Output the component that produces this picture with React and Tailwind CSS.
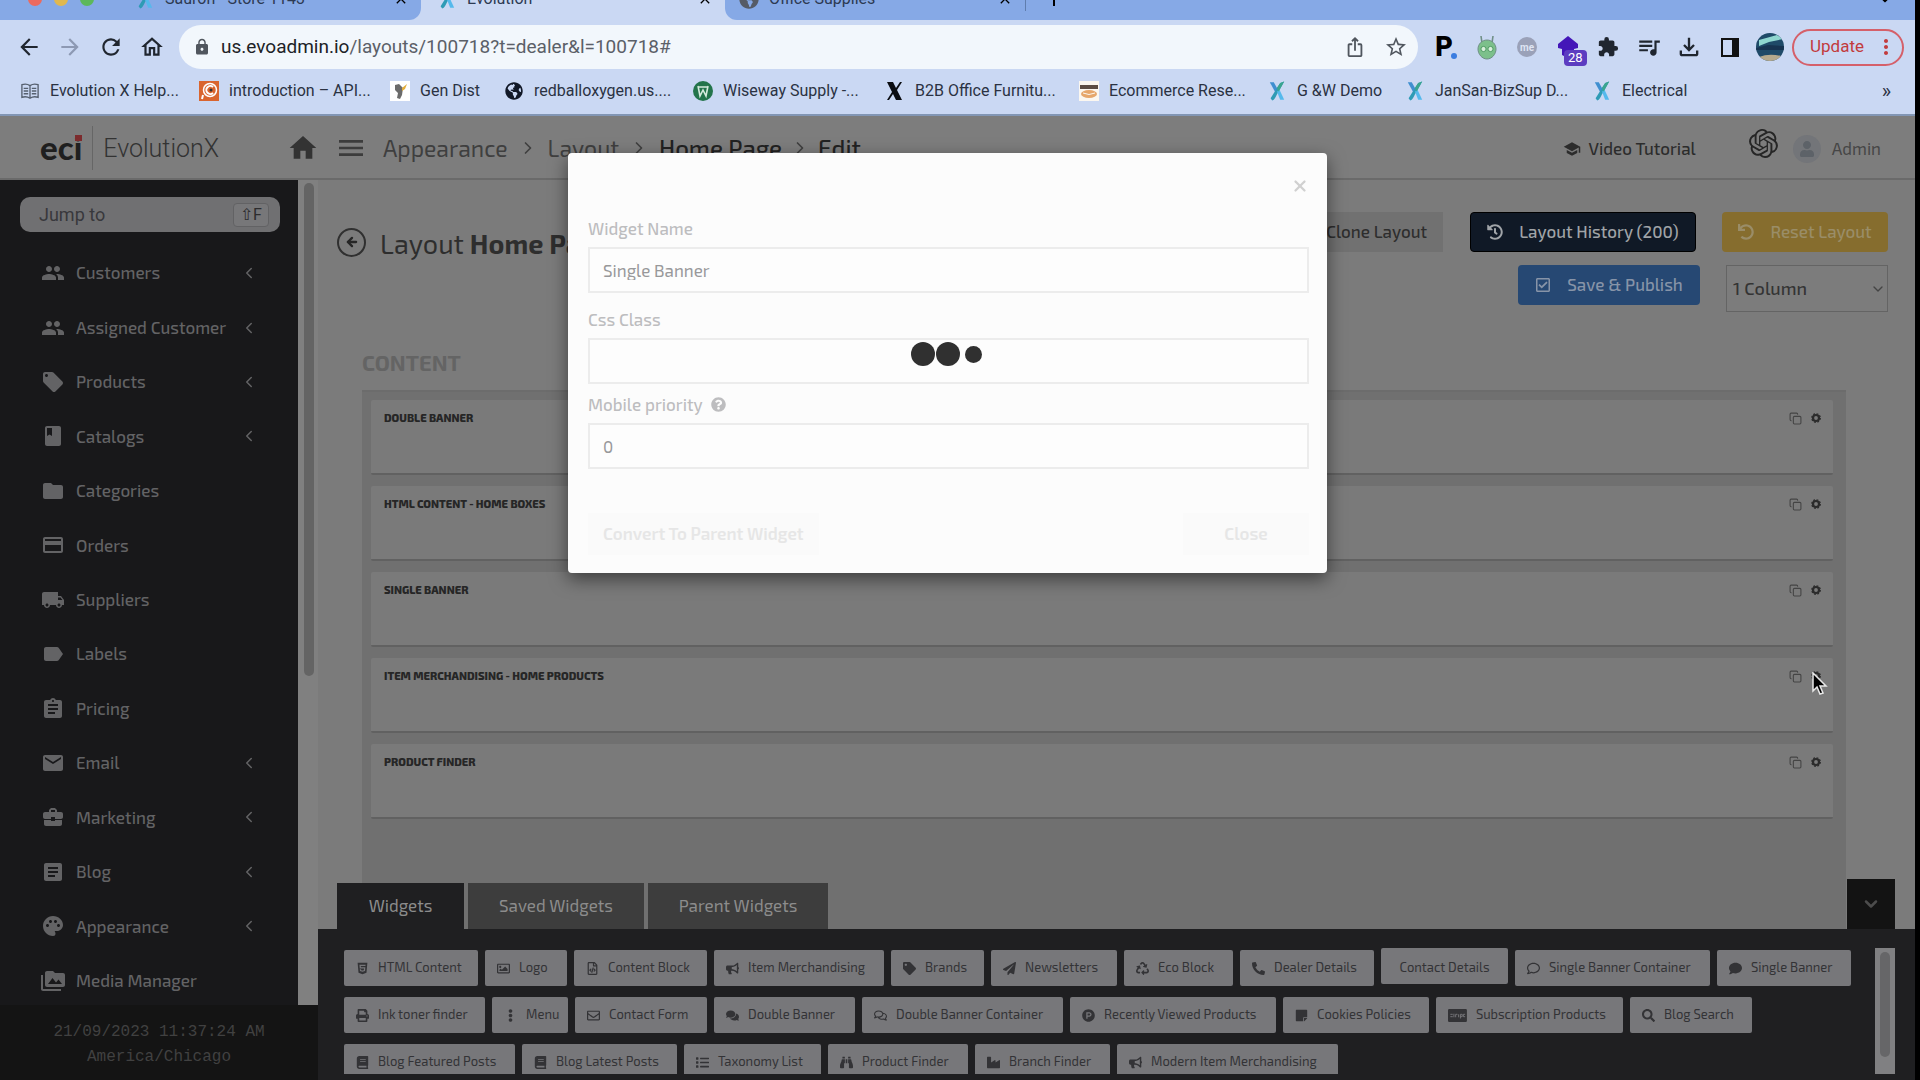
import React from "react";
import {
  MdPeople, MdLocalOffer, MdClass, MdFolder, MdPayment, MdLocalShipping, MdLabel,
  MdAssignment, MdEmail, MdBusinessCenter, MdArticle, MdPalette, MdPermMedia,
  MdHome, MdMenu, MdArrowBack, MdArrowForward, MdRefresh, MdOutlineHome, MdLock,
  MdIosShare, MdStarBorder, MdExtension, MdQueueMusic, MdOutlineFileDownload, MdClose, MdAdd,
  MdMoreVert, MdSchool,
} from "react-icons/md";
import {
  FaHtml5, FaRegImage, FaRegFileCode, FaBullhorn, FaTag, FaPaperPlane, FaRecycle, FaPhoneAlt,
  FaRegComment, FaComment, FaPrint, FaEllipsisV, FaRegEnvelope, FaComments, FaRegComments,
  FaProductHunt, FaStickyNote, FaSearch, FaBook, FaList, FaBinoculars, FaIndustry,
  FaHistory, FaUndo, FaRegCheckSquare, FaQuestionCircle, FaUser, FaGlobeAmericas,
} from "react-icons/fa";
import { SiOpenai } from "react-icons/si";
import { ChevronLeft, ChevronRight, ChevronDown, ArrowLeft, Copy, X } from "lucide-react";

function XLogo({ className }) {
  return (
    <svg viewBox="0 0 20 24" className={className} aria-hidden="true">
      <path d="M1 1h5l5 9-3 4z" fill="#3f8fd0" />
      <path d="M19 0l-5 2L2 21l2 3c3-1 4-4 6-8z" fill="#2e9bb5" />
      <path d="M10 13l3-3 6 13h-5z" fill="#55b9ec" />
      <path d="M19 0l-5 2-4 6 2 5z" fill="#3aa58f" />
    </svg>
  );
}

function Tab({ title, icon, iconBox }) {
  return (
    <>
      <span className={iconBox}>{icon}</span>
      <span className="flex-1 truncate text-base text-[#2d3a52]">{title}</span>
      <button aria-label={"Close " + title} className="mr-3"><MdClose className="size-4" /></button>
    </>
  );
}

function TabStrip() {
  return (
    <div className="h-5 shrink-0 overflow-hidden bg-[#cad8f3]">
      <div className="-mt-6 flex h-11">
        <div className="flex w-[421px] shrink-0 items-center rounded-br-xl bg-[#86a9e6] pl-7 pt-0.5">
          <span className="flex w-[109px] gap-3">
            <i className="size-3.5 rounded-full bg-[#ec6a5e]" />
            <i className="size-3.5 rounded-full bg-[#e0b84f]" />
            <i className="size-3.5 rounded-full bg-[#5cb85c]" />
          </span>
          <Tab title="Sauron - Store 1143" iconBox="w-7" icon={<XLogo className="h-6 w-4" />} />
        </div>
        <div className="flex w-[304px] shrink-0 items-center pl-[18px] pt-0.5">
          <Tab title="Evolution" iconBox="w-7" icon={<XLogo className="h-6 w-4" />} />
        </div>
        <div className="flex flex-1 items-center rounded-bl-xl bg-[#86a9e6] pl-[14px] pt-0.5">
          <div className="flex w-[287px] items-center border-r border-[#5f7dae]">
            <Tab title="Office Supplies" iconBox="w-[30px]" icon={<FaGlobeAmericas className="size-5 text-[#555b66]" />} />
          </div>
          <button aria-label="New tab" className="ml-4"><MdAdd className="size-6" /></button>
          <ChevronDown className="ml-auto mr-5 size-5" />
        </div>
      </div>
    </div>
  );
}

function Alien() {
  return (
    <svg viewBox="0 0 20 26" className="h-[26px] w-5" aria-hidden="true">
      <path d="M5 9L4 2M15 9l1-7" stroke="#6f8f86" strokeWidth="1.6" fill="none" />
      <path d="M10 6c5 0 9 4 9 9s-4 10-9 10-9-5-9-10 4-9 9-9z" fill="#7cc08b" stroke="#6f8f86" />
      <circle cx="6.500" cy="15" r="2.600" fill="#d7efdb" stroke="#4f9a63" />
      <circle cx="13.500" cy="15" r="2.600" fill="#d7efdb" stroke="#4f9a63" />
    </svg>
  );
}

function Toolbar() {
  return (
    <div className="flex h-[54px] shrink-0 items-center pl-4 pr-[11px]">
      <div className="flex w-[163px] shrink-0 items-center gap-[15px] text-[#20262f]">
        <button aria-label="Back"><MdArrowBack className="size-[26px]" /></button>
        <button aria-label="Forward" className="text-[#8d99b3]"><MdArrowForward className="size-[26px]" /></button>
        <button aria-label="Reload"><MdRefresh className="size-[26px]" /></button>
        <button aria-label="Home"><MdOutlineHome className="size-[26px]" /></button>
      </div>
      <div className="flex h-11 flex-1 items-center rounded-full bg-[#f2f7fc] pl-[14px] pr-2.5">
        <MdLock className="mr-[10px] size-[18px] text-[#50565e]" />
        <div className="flex-1 truncate text-[19px] text-[#5b6068]">
          <span className="text-[#202226]">us.evoadmin.io</span>/layouts/100718?t=dealer&amp;l=100718#
        </div>
        <button aria-label="Share" className="mr-[18px] text-[#50565e]"><MdIosShare className="size-[22px]" /></button>
        <button aria-label="Bookmark" className="text-[#50565e]"><MdStarBorder className="size-6" /></button>
      </div>
      <div className="ml-2 flex items-center text-[#20262f]">
        <span className="flex w-10 justify-center text-[27px] font-black leading-none text-black">
          P<i className="-ml-0.5 mb-0.5 size-1.5 self-end rounded-full bg-[#3b7de0]" />
        </span>
        <span className="flex w-[41px] justify-center"><Alien /></span>
        <span className="flex w-10 justify-center">
          <span className="flex size-5 items-center justify-center rounded-full bg-[#9aa1b8] text-[10px] font-bold text-[#dfe5f3]">me</span>
        </span>
        <span className="relative flex w-[41px] justify-center">
          <svg viewBox="0 0 20 22" className="h-[22px] w-5" aria-hidden="true">
            <path d="M10 0l10 8v4l-4 1v6l-6 3-6-3v-6l-4-1V8z" fill="#4316b8" />
          </svg>
          <span className="absolute left-[17px] top-3.5 h-4 rounded-sm bg-[#5c3cc0] px-1 text-[13px] leading-4 text-white">28</span>
        </span>
        <span className="flex w-10 justify-center"><MdExtension className="size-[22px]" /></span>
        <span className="flex w-[41px] justify-center"><MdQueueMusic className="size-[26px]" /></span>
        <span className="flex w-10 justify-center"><MdOutlineFileDownload className="size-7" /></span>
        <span className="flex w-[41px] justify-center">
          <span className="h-[19px] w-[18px] border-2 border-r-[7px] border-[#111]" />
        </span>
        <span className="flex w-10 justify-center">
          <svg viewBox="0 0 28 28" className="size-7 rounded-full" aria-hidden="true">
            <path d="M0 0h28v28H0z" fill="#1f4a68" />
            <path d="M3 7l18-5 6 4-14 3-10 4z" fill="#8fd6cf" />
            <path d="M0 15l12-3 16 1v4H0z" fill="#173350" />
            <path d="M3 24q10-4 22-1l-3 5H6z" fill="#b5a98d" />
          </svg>
        </span>
        <button className="ml-0.5 flex h-[37px] items-center rounded-full border-2 border-[#d5606a] pl-4 pr-1 text-[17px] text-[#c23b3d]">
          Update<MdMoreVert className="ml-2.5 size-6" />
        </button>
      </div>
    </div>
  );
}

const bookmarks = [
  { t: "Evolution X Help...", w: "w-[179px]", i: (
    <svg viewBox="0 0 20 20" className="size-[18px]" aria-hidden="true">
      <path d="M1 3c3-1 6-1 9 1 3-2 6-2 9-1v14c-3-1-6-1-9 1-3-2-6-2-9-1zM10 4v14M3 7h5M3 10h5M3 13h5M12 7h5M12 10h5M12 13h5" fill="none" stroke="#56606f" strokeWidth="1.500" />
    </svg>) },
  { t: "introduction – API...", w: "w-[191px]", i: (
    <svg viewBox="0 0 20 20" className="size-5" aria-hidden="true">
      <path d="M0 0h20v20H0z" fill="#d9652f" />
      <circle cx="11" cy="9" r="6.500" fill="none" stroke="#fff" strokeWidth="1.500" />
      <path d="M14 6a4 4 0 1 0 0 6M4 14l-1 4" fill="none" stroke="#fff" strokeWidth="2" />
      <circle cx="12" cy="9" r="1.500" fill="#333" />
    </svg>) },
  { t: "Gen Dist", w: "w-[114px]", i: (
    <svg viewBox="0 0 20 20" className="size-5" aria-hidden="true">
      <path d="M0 0h20v20H0z" fill="#fff" />
      <path d="M5 4l4-1 4 4-1 7-2 4-3-1 1-5-3-3z" fill="#6b6b6b" />
      <path d="M12 7l5-4-2 5-3 2z" fill="#e2ad3b" />
    </svg>) },
  { t: "redballoxygen.us....", w: "w-[189px]", i: <FaGlobeAmericas className="size-[18px] text-[#111827]" /> },
  { t: "Wiseway Supply -...", w: "w-[192px]", i: (
    <svg viewBox="0 0 20 20" className="size-5" aria-hidden="true">
      <circle cx="10" cy="10" r="10" fill="#23744b" />
      <path d="M5 5l2 10 3-6 3 6 2-10M6 6h8" fill="none" stroke="#d5eadd" strokeWidth="1.600" />
    </svg>) },
  { t: "B2B Office Furnitu...", w: "w-[194px]", i: (
    <svg viewBox="0 0 20 20" className="size-5" aria-hidden="true">
      <path d="M2 1h6l3 6 4-6h2l-5 8 5 10h-6l-3-6-4 6H2l5-8z" fill="#0b0d12" />
    </svg>) },
  { t: "Ecommerce Rese...", w: "w-[188px]", i: (
    <svg viewBox="0 0 20 20" className="size-5" aria-hidden="true">
      <path d="M0 0h20v20H0z" fill="#fbf7f0" />
      <path d="M1 4h18v4H1z" fill="#5b4c44" />
      <ellipse cx="10" cy="13" rx="8" ry="4" fill="#e6a76c" />
      <path d="M4 12q6 3 12 0" stroke="#fbf7f0" fill="none" />
    </svg>) },
  { t: "G &W Demo", w: "w-[138px]", i: <XLogo className="h-6 w-4" /> },
  { t: "JanSan-BizSup D...", w: "w-[187px]", i: <XLogo className="h-6 w-4" /> },
  { t: "Electrical", w: "w-[120px]", i: <XLogo className="h-6 w-4" /> },
];

function BookmarkBar() {
  return (
    <nav className="flex h-[42px] shrink-0 items-center border-b-2 border-[#8296b4] pb-1.5 pl-5 text-base text-[#2a3242]">
      {bookmarks.map((b) => (
        <a key={b.t} href="#" className={"flex items-center gap-2.5 whitespace-nowrap " + b.w}>
          <span className="flex w-5 shrink-0 justify-center">{b.i}</span>
          {b.t}
        </a>
      ))}
      <button aria-label="More bookmarks" className="ml-auto mr-6 text-xl leading-none">»</button>
    </nav>
  );
}

const menu = [
  ["Customers", MdPeople, true],
  ["Assigned Customer", MdPeople, true],
  ["Products", MdLocalOffer, true],
  ["Catalogs", MdClass, true],
  ["Categories", MdFolder, false],
  ["Orders", MdPayment, false],
  ["Suppliers", MdLocalShipping, false],
  ["Labels", MdLabel, false],
  ["Pricing", MdAssignment, false],
  ["Email", MdEmail, true],
  ["Marketing", MdBusinessCenter, true],
  ["Blog", MdArticle, true],
  ["Appearance", MdPalette, true],
  ["Media Manager", MdPermMedia, false],
];

function Sidebar() {
  return (
    <aside className="flex w-[318px] shrink-0 flex-col">
      <div className="flex min-h-0 flex-1">
        <div className="flex w-[298px] flex-col bg-[#18181a] pt-[17px]">
          <div className="mx-5 flex h-[35px] w-[260px] shrink-0 items-center rounded-[10px] bg-[#707072] pl-[19px] pr-[11px]">
            <input aria-label="Jump to" placeholder="Jump to" className="min-w-0 flex-1 bg-transparent font-[Roboto] text-[18px] text-[#38383c] outline-none placeholder:text-[#38383c]" />
            <kbd className="flex h-6 w-9 items-center justify-center rounded-sm border border-[#626264] bg-[#777779] font-[Roboto] text-base text-[#2c2c2e]">⇧F</kbd>
          </div>
          <nav className="-mb-[3px] mt-[14px] flex min-h-0 flex-1 flex-col text-[#636365]">
            {menu.map(([t, Icon, sub]) => (
              <a key={t} href="#" className="flex min-h-0 flex-1 items-center pl-[41px] pr-10 text-[17px] font-medium">
                <Icon className="mr-[11px] size-6" />
                <span className="flex-1 whitespace-nowrap">{t}</span>
                {sub && <ChevronLeft className="size-[18px]" strokeWidth={2} />}
              </a>
            ))}
          </nav>
        </div>
        <div className="w-5 bg-[#808080] pl-1.5 pt-[3px]">
          <div className="h-3/5 w-2.5 rounded-full bg-[#646464]" />
        </div>
      </div>
      <div className="z-10 flex h-[75px] shrink-0 flex-col items-center justify-center bg-[#141414] pt-1 font-['Liberation_Mono'] text-base leading-[25px] text-[#414141]">
        <span>21/09/2023 11:37:24 AM</span>
        <span>America/Chicago</span>
      </div>
    </aside>
  );
}

function AppHeader() {
  return (
    <header className="flex h-16 shrink-0 items-center border-b-2 border-[#6a6a6a] bg-[#7d7d7d] pl-10 pr-[34px] pt-0.5">
      <div className="flex w-[247px] shrink-0 items-center">
        <span className="relative mb-0.5 font-[Lato] text-[33px] font-black leading-none text-[#1f1f1f]">
          eci
          <i className="absolute right-0 top-1 h-1.5 w-[7px] bg-[#7c2b2d]" />
        </span>
        <span className="ml-2.5 h-11 w-px bg-[#666]" />
        <span className="ml-2.5 pt-0.5 font-[Roboto] text-[25px] font-light text-[#333]">EvolutionX</span>
      </div>
      <MdHome className="size-8 text-[#333]" />
      <MdMenu className="ml-4 mr-4 size-8 text-[#3c3c3c]" />
      <nav className="flex items-center text-[23px] text-[#3f3f3f]">
        <a href="#">Appearance</a>
        <ChevronRight className="mx-2.5 size-5" />
        <a href="#">Layout</a>
        <ChevronRight className="mx-2.5 size-5" />
        <a href="#" className="text-2xl font-medium text-[#222]">Home Page</a>
        <ChevronRight className="mx-2 size-5" />
        <span className="text-2xl font-medium text-[#222]">Edit</span>
      </nav>
      <a href="#" className="ml-auto flex items-center gap-2 pt-0.5 text-[17px] font-medium text-[#2c2c2c]">
        <MdSchool className="size-[18px]" />Video Tutorial
      </a>
      <SiOpenai className="mb-2.5 ml-[53px] mr-[15px] size-[29px] text-[#262626]" />
      <button className="flex items-center gap-[11px] pt-0.5 text-[17px] text-[#464646]">
        <span className="flex size-7 items-center justify-center rounded-full bg-[#737579]">
          <FaUser className="size-4 text-[#5d6268]" />
        </span>
        Admin
      </button>
    </header>
  );
}

const cards = ["DOUBLE BANNER", "HTML CONTENT - HOME BOXES", "SINGLE BANNER", "ITEM MERCHANDISING - HOME PRODUCTS", "PRODUCT FINDER"];

function Gear() {
  return (
    <svg viewBox="0 0 10 10" className="size-2.5" aria-hidden="true">
      <circle cx="5" cy="5" r="3" fill="none" stroke="#2b2b2b" strokeWidth="2.200" />
      <circle cx="5" cy="5" r="4.300" fill="none" stroke="#2b2b2b" strokeWidth="1.200" strokeDasharray="1.800 1.580" />
    </svg>
  );
}

function Content() {
  return (
    <main className="flex min-h-0 flex-1 flex-col overflow-hidden pl-[19px] pr-[27px]">
      <div className="flex h-[143px] shrink-0 pt-8">
        <div className="flex h-[60px] items-center">
          <button aria-label="Back" className="mr-[14px] flex size-[29px] items-center justify-center rounded-full border-2 border-[#303030] text-[#262626]">
            <ArrowLeft className="size-3.5" strokeWidth={4} />
          </button>
          <h1 className="whitespace-nowrap pt-0.5 text-[27px] text-[#2e2e2e]">Layout <b>Home Page</b></h1>
        </div>
        <div className="ml-auto flex flex-col items-end gap-[13px] text-[17px]">
          <div className="flex">
            <button className="mr-[27px] h-10 bg-[#717171] px-4 font-medium text-[#2d2d2d]">Clone Layout</button>
            <button className="mr-[26px] flex h-10 w-[226px] items-center justify-center gap-4 rounded-sm border border-black bg-[#101926] font-medium text-[#a0a4a8]">
              <FaHistory className="size-4" />Layout History (200)
            </button>
            <button className="flex h-10 w-[166px] items-center justify-center gap-4 rounded-sm bg-[#866d2e] font-medium text-[#9a8d68]">
              <FaUndo className="size-4" />Reset Layout
            </button>
          </div>
          <div className="flex">
            <button className="mr-[26px] flex h-10 w-[182px] items-center justify-center gap-4 rounded-sm bg-[#264873] font-medium text-[#8794a8]">
              <FaRegCheckSquare className="size-4" />Save &amp; Publish
            </button>
            <div className="relative">
              <select aria-label="Columns" className="h-[47px] w-[162px] appearance-none border border-[#646464] bg-[#7c7c7c] pb-0.5 pl-1.5 text-lg font-medium text-[#343434]">
                <option>1 Column</option>
              </select>
              <ChevronDown className="absolute right-0.5 top-4 size-4 text-[#444]" />
            </div>
          </div>
        </div>
      </div>
      <h2 className="ml-[25px] h-[67px] shrink-0 pt-[23px] text-[22px] font-bold text-[#646464]">CONTENT</h2>
      <section className="ml-[25px] mr-[42px] flex flex-1 flex-col gap-[11px] border-t-2 border-[#6c6c6c] bg-[#707070] py-2 pl-[9px] pr-[13px]">
        {cards.map((c) => (
          <article key={c} className="flex h-[75px] shrink-0 items-start rounded-xs border-b-2 border-[#616161] bg-[#7a7a7a] pl-[13px] pr-3 pt-2">
            <h3 className="flex-1 text-[11px] font-extrabold leading-5 text-[#262626]">{c}</h3>
            <button aria-label={"Copy " + c} className="mr-[9px] flex h-5 items-center"><Copy className="size-[13px] text-[#444]" /></button>
            <button aria-label={"Settings " + c} className="flex h-5 items-center"><Gear /></button>
          </article>
        ))}
      </section>
    </main>
  );
}

function CardStripe({ className }) {
  return (
    <svg viewBox="0 0 32 22" className={className} aria-hidden="true">
      <rect width="32" height="22" rx="2" fill="currentColor" />
      <path d="M4 9h4M4 13h4M10 8v6M13 14V9h3M18 9v5M21 9v7M21 9h3v4h-3M29 9h-3v4h3" fill="none" stroke="#77777a" strokeWidth="1.600" />
    </svg>
  );
}

const widgets = [
  ["HTML Content", FaHtml5, "w-[134px]"],
  ["Logo", FaRegImage, "w-[82px]"],
  ["Content Block", FaRegFileCode, "w-[133px]"],
  ["Item Merchandising", FaBullhorn, "w-[170px]"],
  ["Brands", FaTag, "w-[93px]"],
  ["Newsletters", FaPaperPlane, "w-[126px]"],
  ["Eco Block", FaRecycle, "w-[109px]"],
  ["Dealer Details", FaPhoneAlt, "w-[134px]"],
  ["Contact Details", null, "w-[127px]"],
  ["Single Banner Container", FaRegComment, "w-[195px]"],
  ["Single Banner", FaComment, "w-[134px]"],
  ["Ink toner finder", FaPrint, "w-[141px]"],
  ["Menu", FaEllipsisV, "w-[76px]"],
  ["Contact Form", FaRegEnvelope, "w-[132px]"],
  ["Double Banner", FaComments, "w-[141px]"],
  ["Double Banner Container", FaRegComments, "w-[201px]"],
  ["Recently Viewed Products", FaProductHunt, "w-[206px]"],
  ["Cookies Policies", FaStickyNote, "w-[146px]"],
  ["Subscription Products", CardStripe, "w-[187px]"],
  ["Blog Search", FaSearch, "w-[122px]"],
  ["Blog Featured Posts", FaBook, "w-[171px]"],
  ["Blog Latest Posts", FaBook, "w-[155px]"],
  ["Taxonomy List", FaList, "w-[137px]"],
  ["Product Finder", FaBinoculars, "w-[140px]"],
  ["Branch Finder", FaIndustry, "w-[135px]"],
  ["Modern Item Merchandising", FaBullhorn, "w-[221px]"],
];

function WidgetDock() {
  return (
    <section className="shrink-0">
      <div className="relative">
        <div role="tablist" className="absolute bottom-0 left-[19px] flex gap-1 text-[17px] text-[#8c8c8c]">
          <button role="tab" className="h-[46px] w-[127px] bg-[#1f1f21]">Widgets</button>
          <button role="tab" className="h-[46px] w-[176px] bg-[#3d3d3d]">Saved Widgets</button>
          <button role="tab" className="h-[46px] w-[180px] bg-[#3d3d3d]">Parent Widgets</button>
        </div>
        <button aria-label="Collapse" className="absolute bottom-0 right-5 flex h-[50px] w-12 items-center justify-center bg-[#131313] text-[#4c4c4c]">
          <ChevronDown className="size-5" strokeWidth={3} />
        </button>
      </div>
      <div className="flex h-[151px] bg-[#1f1f21] pb-1.5 pl-[26px] pr-5 pt-[19px]">
        <div className="flex flex-1 flex-wrap content-start gap-x-[7px] gap-y-[11px] overflow-hidden pt-0.5">
          {widgets.map(([t, Icon, w]) => (
            <button key={t} className={"flex h-9 items-center whitespace-nowrap rounded-xs bg-[#77777a] text-[13px] text-[#333336] " + w + (Icon ? " gap-[9px] pl-3" : " -mt-0.5 justify-center pt-1")}>
              {Icon && <Icon className="h-[13px] w-auto shrink-0" />}
              {t}
            </button>
          ))}
        </div>
        <div className="w-5 bg-[#808082] pl-[5px] pt-1">
          <div className="h-[105px] w-2.5 rounded-full bg-[#666668]" />
        </div>
      </div>
    </section>
  );
}

function Field({ id, label, value, help, className }) {
  return (
    <div className={className}>
      <label htmlFor={id} className="flex h-[29px] items-center gap-2 text-[17px] font-medium text-[#bdbdbf]">
        {label}{help && <FaQuestionCircle className="size-[15px]" />}
      </label>
      <input id={id} defaultValue={value} className="mt-1 block h-[46px] w-full border-2 border-[#ececec] bg-[#fdfdfd] px-[13px] text-[17px] text-[#98989a] outline-none" />
    </div>
  );
}

function Modal() {
  return (
    <div role="dialog" aria-label="Widget settings" className="absolute left-[568px] right-[588px] top-[153px] z-20 rounded-sm bg-[#fcfcfc] pb-[18px] pl-5 pr-[18px] pt-5 shadow-[0_6px_18px_rgba(0,0,0,0.5)]">
      <div className="flex h-[41px] justify-end pt-1">
        <button aria-label="Close dialog" className="size-[18px] text-[#d0d0d0]"><X className="size-[18px]" strokeWidth={3} /></button>
      </div>
      <Field id="wname" label="Widget Name" value="Single Banner" />
      <Field id="css" label="Css Class" value="" className="mt-3" />
      <Field id="prio" label="Mobile priority" value="0" help className="mt-1.5" />
      <div className="mt-11 flex justify-between text-[17px] font-semibold text-[#e6e6e6]">
        <button className="h-[42px] bg-[#fafafa] px-[15px]">Convert To Parent Widget</button>
        <button className="h-[42px] w-[126px] bg-[#fafafa]">Close</button>
      </div>
      <div className="absolute left-[343px] top-[189px] flex items-center gap-px">
        <i className="size-6 rounded-full bg-[#303030]" />
        <i className="size-6 rounded-full bg-[#303030]" />
        <i className="ml-1 size-[17px] rounded-full bg-[#303030]" />
      </div>
    </div>
  );
}

export default function App() {
  return (
    <div className="relative flex h-screen flex-col overflow-hidden border-r-[5px] border-black bg-[#7b7b7b] font-['Exo_2','Open_Sans',sans-serif]">
      <div className="flex shrink-0 flex-col bg-[#cad8f3] font-[Roboto]">
        <TabStrip />
        <Toolbar />
        <BookmarkBar />
      </div>
      <AppHeader />
      <div className="flex min-h-0 flex-1">
        <Sidebar />
        <div className="flex min-w-0 flex-1 flex-col">
          <Content />
          <WidgetDock />
        </div>
      </div>
      <Modal />
      <svg viewBox="0 0 16 24" className="absolute left-[1812px] top-[672px] z-30 h-6 w-4" aria-hidden="true">
        <path d="M1 1v18l4-4 3 7 3-1-3-7h6z" fill="#000" stroke="#e8e8e8" strokeWidth="1.500" />
      </svg>
    </div>
  );
}
